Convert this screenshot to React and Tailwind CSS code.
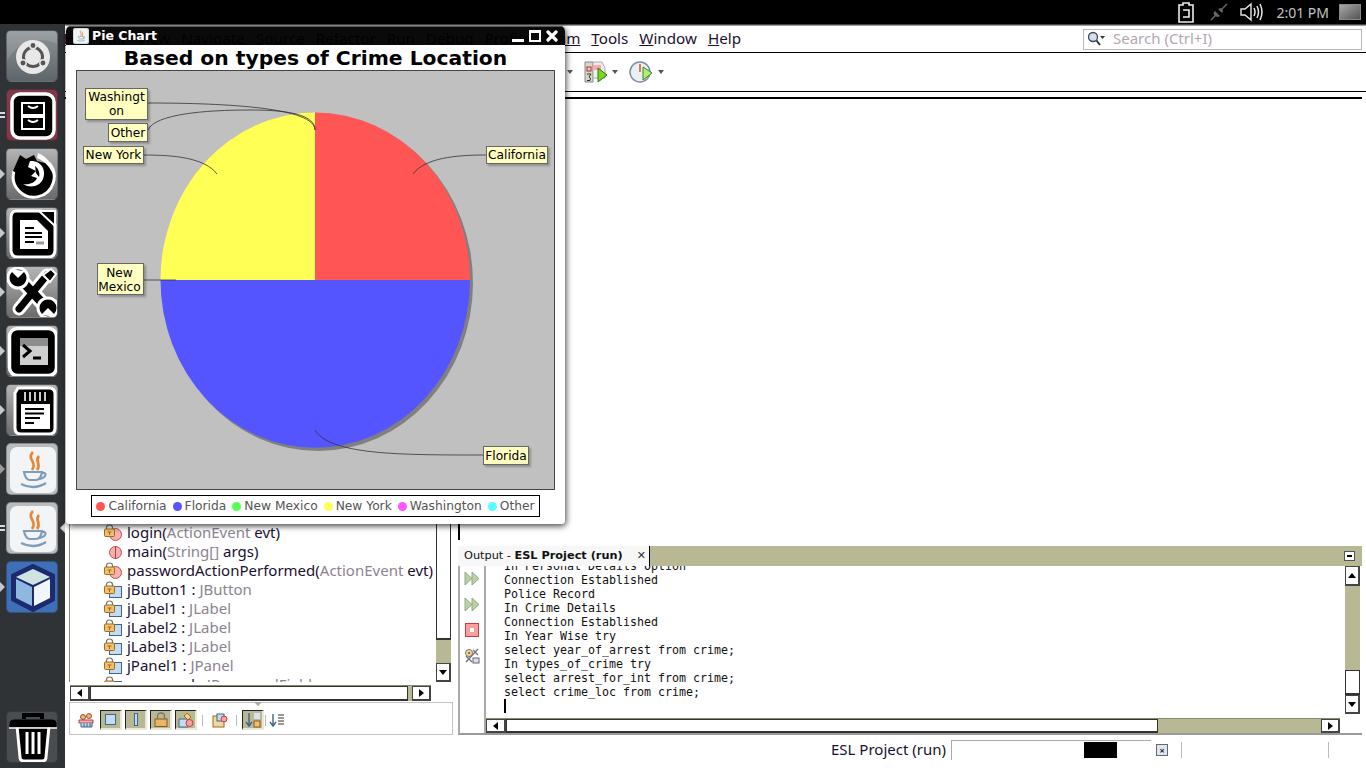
import React from "react";

const UI = "font-['Noto_Sans',sans-serif]";
const DV = "font-['DejaVu_Sans',sans-serif]";

function Tile({ bg, children, indicator, right }) {
  return (
    <div className="relative w-[52px] h-[52px] ml-[6px] shrink-0">
      <div className={`w-full h-full rounded-[5px] border border-[#00000040] overflow-hidden ${bg}`}>{children}</div>
      {indicator === "arrow" && <span className="absolute -left-[6px] top-[21px] w-0 h-0 border-y-[5px] border-y-transparent border-l-[5px] border-l-[#c8c8c8]" />}
      {indicator === "hollow" && <span className="absolute -left-[6px] top-[21px] w-0 h-0 border-y-[5px] border-y-transparent border-l-[5px] border-l-[#9a9a9a]" />}
      {indicator === "double" && (
        <span className="absolute -left-[6px] top-[23px] w-[5px] flex flex-col gap-[2px]">
          <span className="h-[2px] bg-[#d8d8d8]" />
          <span className="h-[2px] bg-[#d8d8d8]" />
        </span>
      )}
      {right && <span className="absolute -right-[7px] top-[21px] w-0 h-0 border-y-[5px] border-y-transparent border-r-[5px] border-r-[#d0d0d0]" />}
    </div>
  );
}

const Svg = ({ children }) => <svg viewBox="0 0 52 52" width="52" height="52" className="block">{children}</svg>;

const UbuntuIcon = () => (
  <Svg>
    <path d="M0 30 C12 8 34 4 52 14 V0 H0Z" fill="#ffffff" opacity=".12" />
    <circle cx="26" cy="26" r="17" fill="#e8e8e8" />
    <circle cx="26" cy="26" r="9.5" fill="none" stroke="#555" strokeWidth="3" />
    <circle cx="26" cy="14.5" r="3.2" fill="#555" stroke="#e8e8e8" strokeWidth="1.5" />
    <circle cx="16" cy="32" r="3.2" fill="#555" stroke="#e8e8e8" strokeWidth="1.5" />
    <circle cx="36" cy="32" r="3.2" fill="#555" stroke="#e8e8e8" strokeWidth="1.5" />
  </Svg>
);
const FilesIcon = () => (
  <Svg>
    <rect x="5" y="4" width="42" height="44" rx="8" fill="#000" stroke="#fff" strokeWidth="3.5" />
    <rect x="15" y="13" width="22" height="12" fill="none" stroke="#fff" strokeWidth="2" />
    <rect x="15" y="27" width="22" height="12" fill="none" stroke="#fff" strokeWidth="2" />
    <path d="M21 16 q5 4 10 0 M21 30 q5 4 10 0" fill="none" stroke="#fff" strokeWidth="2" />
  </Svg>
);
const FoxIcon = () => (
  <Svg>
    <path d="M7 22 A20.5 20.5 0 1 0 42 14" fill="#000" stroke="#fff" strokeWidth="3" />
    <path d="M6 22 L13 6 L19 10 L27 6 L30 12 L42 15 L40 30 L20 30Z" fill="#000" />
    <path d="M31 4 C41 8 48 18 47 28 C44 19 38 12 30 9Z" fill="#fff" />
    <path d="M23 12 C33 11 40 20 36 30 C33 37 24 40 16 35 C22 36 28 34 30 29 L24 27 L29 22 L21 18Z" fill="#fff" />
    <path d="M28 17 C32 20 33 25 32 28 L29 24Z" fill="#000" />
  </Svg>
);
const WriterIcon = () => (
  <Svg>
    <path d="M9 3 H34 L48 17 V42 Q48 49 41 49 H11 Q4 49 4 42 V10 Q4 3 9 3Z" fill="#000" stroke="#fff" strokeWidth="3" />
    <path d="M13 12 H30 L41 23 V41 H13Z" fill="#fff" />
    <path d="M32 3 L48 3 L48 18Z" fill="#000" stroke="#fff" strokeWidth="2" />
    <path d="M18 20 H27 M18 25 H35 M18 29 H35 M18 34 H27" stroke="#000" strokeWidth="2.2" />
    <path d="M29 35 H37" stroke="#999" strokeWidth="3" />
  </Svg>
);
const ToolsIcon = () => (
  <Svg>
    <g fill="none" strokeLinecap="round">
      <path d="M13 12 L40 41" stroke="#fff" strokeWidth="15" />
      <path d="M40 8 L12 42" stroke="#fff" strokeWidth="13" />
      <path d="M13 12 L40 41" stroke="#000" strokeWidth="9" />
      <path d="M40 8 L12 42" stroke="#000" strokeWidth="7" />
    </g>
    <circle cx="11" cy="11" r="10" fill="#000" stroke="#fff" strokeWidth="3" />
    <path d="M2 2 L11 11 L18 4Z" fill="#fff" />
    <circle cx="41" cy="41" r="10" fill="#000" stroke="#fff" strokeWidth="3" />
    <path d="M50 50 L41 41 L34 48Z" fill="#fff" />
    <path d="M36 8 L44 2 L49 7 L43 15Z" fill="#000" stroke="#fff" strokeWidth="2" />
  </Svg>
);
const TerminalIcon = () => (
  <Svg>
    <rect x="2.5" y="2.5" width="47" height="47" rx="8" fill="#000" stroke="#fff" strokeWidth="3.5" />
    <rect x="13" y="12" width="28" height="27" fill="#cfcfcf" />
    <rect x="13" y="12" width="28" height="8" fill="#8d8d8d" />
    <path d="M16 19 L23 25 L16 31" fill="none" stroke="#000" strokeWidth="3" />
    <path d="M26 32 H34" stroke="#000" strokeWidth="3" />
  </Svg>
);
const NotesIcon = () => (
  <Svg>
    <path d="M11 3 H42 Q48 3 48 9 V43 Q48 49 42 49 H14 Q8 49 8 43 V8Z" fill="#000" stroke="#fff" strokeWidth="3" />
    <path d="M18 7 V16 M23 7 V16 M28 7 V16 M33 7 V16 M38 7 V16" stroke="#ccc" strokeWidth="2" />
    <rect x="14" y="19" width="29" height="25" fill="#fff" />
    <path d="M18 24 H37 M18 28.5 H37 M18 33 H33 M18 38 H27" stroke="#000" strokeWidth="2.2" />
  </Svg>
);
const JavaGlyph = ({ s = 52 }) => (
  <svg viewBox="0 0 52 52" width={s} height={s} className="block">
    <rect x="3" y="3" width="46" height="46" rx="7" fill="#f2f4f6" />
    <path d="M26 8 C19 15 31 18 25 26 M32 12 C27 17 35 20 30 26" fill="none" stroke="#e8873a" strokeWidth="2.8" />
    <path d="M17 28 H35 C34 34 32 36 29 36 H23 C20 36 18 33 17 28Z M35 29 C40 28 40 33 33 35" fill="none" stroke="#7f9db8" strokeWidth="2.2" />
    <path d="M14 40 C22 44 31 44 39 39" fill="none" stroke="#7f9db8" strokeWidth="2.4" />
  </svg>
);
const CubeIcon = () => (
  <Svg>
    <path d="M26 3 L47 13 V38 L26 49 L5 38 V13Z" fill="#1c2a6e" stroke="#1c2a6e" strokeWidth="2" strokeLinejoin="round" />
    <path d="M26 7 L43 15 L26 23 L9 15Z" fill="#cfe4e2" />
    <path d="M9 17 L25 25 V44 L9 36Z" fill="#8fb8e0" />
    <path d="M27 25 L43 17 V36 L27 44Z" fill="#f0f6fb" />
  </Svg>
);
const TrashIcon = () => (
  <Svg>
    <path d="M10 14 H42 L39 45 Q39 49 35 49 H17 Q13 49 13 45Z" fill="#000" stroke="#fff" strokeWidth="3" />
    <path d="M3 15 V11 Q3 8 7 8 H45 Q49 8 49 11 V15Z" fill="#000" stroke="#000" />
    <path d="M17 7 V3 H35 V7" fill="none" stroke="#000" strokeWidth="4" />
    <path d="M20 20 V42 M26 20 V42 M32 20 V42" stroke="#fff" strokeWidth="3" />
    <path d="M2 16 H50" stroke="#fff" strokeWidth="1.5" />
  </Svg>
);

function Launcher() {
  const gray = "bg-linear-to-b from-[#b4b4b4] to-[#6b6b6b]";
  return (
    <div className="w-[65px] shrink-0 flex flex-col pt-[6px] pb-[5px] gap-[7px] bg-[#2f3336]">
      <Tile bg="bg-linear-to-b from-[#8d9498] to-[#5f666a]"><UbuntuIcon /></Tile>
      <Tile bg="bg-[#7d3a4a]" indicator="double"><FilesIcon /></Tile>
      <Tile bg={gray} indicator="arrow"><FoxIcon /></Tile>
      <Tile bg={gray} indicator="arrow"><WriterIcon /></Tile>
      <Tile bg={gray} indicator="arrow"><ToolsIcon /></Tile>
      <Tile bg={gray} indicator="arrow"><TerminalIcon /></Tile>
      <Tile bg={gray} indicator="arrow"><NotesIcon /></Tile>
      <Tile bg="bg-[#b9bcbe]" indicator="hollow"><JavaGlyph /></Tile>
      <Tile bg="bg-[#b9bcbe]" indicator="double" right><JavaGlyph /></Tile>
      <Tile bg="bg-[#3f6fb5]" indicator="arrow"><CubeIcon /></Tile>
      <div className="mt-auto"><Tile bg="bg-[#4a4d50]"><TrashIcon /></Tile></div>
    </div>
  );
}

function TopBar() {
  return (
    <div className="h-[24px] shrink-0 bg-black flex items-center justify-end text-[#c8c8c8]">
      <svg width="18" height="22" viewBox="1 0 18 22" className="mr-[14px]">
        <path d="M3 4 H7 V2 H13 V4 H17 V21 H3Z M7 9 H13 V16 H7" fill="none" stroke="#eee" strokeWidth="1.6" />
      </svg>
      <svg width="20" height="20" viewBox="0 0 20 20" className="mr-[10px]">
        <path d="M2 18 L7 13 M13 7 L18 2" stroke="#666" strokeWidth="1.5" />
        <path d="M6 9 L11 14 L9 15 Q7 15 5 13 Q4 11 5 10Z M9 7 L13 11 L14 9 Q14 7 12 6Z" fill="#666" />
      </svg>
      <svg width="24" height="20" viewBox="0 0 24 20" className="mr-[13px]">
        <path d="M2 7 H6 L12 2 V18 L6 13 H2Z" fill="none" stroke="#e8e8e8" strokeWidth="1.4" />
        <path d="M15 6 Q17 10 15 14 M18 4 Q21 10 18 16 M21 2 Q25 10 21 18" fill="none" stroke="#e8e8e8" strokeWidth="1.5" />
      </svg>
      <span className={`${UI} text-[14px] mr-[10px] text-[#c4c4c4]`}>2:01 PM</span>
      <div className="w-[22px] h-[16px] mr-[5px] bg-linear-to-br from-[#a8a8a8] to-[#555] border border-[#888]" />
    </div>
  );
}

const MenuItem = ({ pre = "", u, post = "" }) => (
  <span>{pre}<u>{u}</u>{post}</span>
);

function MenuBar() {
  return (
    <div className="h-[29px] shrink-0 flex items-center border-b border-black bg-linear-to-b from-[#222] from-0% via-white via-[9%] to-white">
      <div className={`w-[676px] flex justify-end gap-[11px] ${UI} text-[15.2px] text-[#1c1030]`}>
        <MenuItem u="F" post="ile" />
        <MenuItem u="E" post="dit" />
        <MenuItem u="V" post="iew" />
        <MenuItem u="N" post="avigate" />
        <MenuItem u="S" post="ource" />
        <MenuItem pre="Ref" u="a" post="ctor" />
        <MenuItem u="R" post="un" />
        <MenuItem u="D" post="ebug" />
        <MenuItem u="P" post="rofile" />
        <MenuItem pre="Te" u="am" />
        <MenuItem u="T" post="ools" />
        <MenuItem u="W" post="indow" />
        <MenuItem u="H" post="elp" />
      </div>
      <div className="ml-auto mr-[4px] mt-[2px] w-[279px] h-[21px] border border-[#b8b8b8] flex items-center pl-[3px]">
        <svg width="18" height="16" viewBox="0 0 18 16">
          <circle cx="6" cy="6" r="4.5" fill="#cfe0f2" stroke="#445" strokeWidth="1.3" />
          <path d="M9.5 9.5 L13 14" stroke="#333" strokeWidth="2" />
          <path d="M13 5 H18 L15.5 8Z" fill="#333" />
        </svg>
        <span className={`${UI} text-[15px] leading-[17px] pb-[2px] text-[#b3a8b3] ml-[8px]`}>Search (Ctrl+I)</span>
      </div>
    </div>
  );
}

const Caret = () => <span className="w-0 h-0 border-x-[3.5px] border-x-transparent border-t-[4px] border-t-[#555]" />;

function ToolBar() {
  return (
    <div className="h-[39px] shrink-0 flex items-center border-b border-black pl-[502px]">
      <Caret />
      <svg width="24" height="24" viewBox="0 0 24 24" className="ml-[11px]">
        <path d="M1 2 H9 V22 H1Z" fill="#d8d6c4" stroke="#888" />
        <path d="M9 2 H18 L21 8 V18 H9Z" fill="#eee" stroke="#aaa" />
        <path d="M9 5 H17 V10 H9Z" fill="#f9a8a8" />
        <rect x="3" y="7" width="4" height="4" fill="none" stroke="#b03030" />
        <path d="M3 14 H7 L5 17 Q7.5 18 6 20.5 H3" fill="none" stroke="#333" />
        <path d="M14 8 L23 15 L14 22Z" fill="#7ed321" stroke="#2a7a10" />
      </svg>
      <span className="ml-[4px] flex"><Caret /></span>
      <svg width="24" height="24" viewBox="0 0 24 24" className="ml-[11px]">
        <circle cx="11" cy="12" r="10" fill="#e8eff6" stroke="#7d8ea0" strokeWidth="1.5" />
        <path d="M11 4 V12" stroke="#d06020" strokeWidth="1.6" />
        <path d="M14 7 L23 13 L14 20Z" fill="#b4ec78" stroke="#3a8a20" />
      </svg>
      <span className="ml-[5px] flex"><Caret /></span>
    </div>
  );
}

const Lock = () => (
  <svg width="11" height="13" viewBox="0 0 11 13" className="block">
    <path d="M2.5 5 V3.5 Q2.5 1 5.5 1 Q8.5 1 8.5 3.5 V5" fill="none" stroke="#776" strokeWidth="1.2" />
    <rect x="0.5" y="5" width="10" height="7.5" rx="1" fill="#f0c070" stroke="#a06a20" />
    <path d="M3.5 8 H7.5 M5.5 8 V11" stroke="#a06a20" />
  </svg>
);
const PrivMethod = () => (
  <span className="relative block w-[20px] h-[17px]">
    <span className="absolute left-[5px] top-[4px] w-[13px] h-[13px] rounded-full bg-[#f8b0b0] border border-[#c05050]" />
    <span className="absolute left-0 top-0"><Lock /></span>
  </span>
);
const PrivField = () => (
  <span className="relative block w-[20px] h-[17px]">
    <span className="absolute left-[5px] top-[5px] w-[13px] h-[12px] bg-[#c4dcf2] border border-[#40648c]" />
    <span className="absolute left-0 top-0"><Lock /></span>
  </span>
);
const StaticMethod = () => (
  <span className="relative block w-[20px] h-[17px]">
    <span className="absolute left-[5px] top-[3px] w-[13px] h-[13px] rounded-full bg-[#f4b0b0] border border-[#c05050]" />
    <span className="absolute left-[11px] top-[3px] w-[1px] h-[13px] bg-[#b04040]" />
  </span>
);

function Row({ icon, name, type, tail, sep }) {
  return (
    <div className="h-[19px] shrink-0 flex items-center pl-[33px] whitespace-pre">
      <span className="w-[23px] shrink-0">{icon}</span>
      <span className="text-[#1a1030]">{name}</span>
      {sep && <span className="text-[#1a1030]"> : </span>}
      <span className="text-[#8c8490]">{type}</span>
      {tail && <span className="text-[#1a1030]">{tail}</span>}
    </div>
  );
}

const Arrow = ({ dir }) => {
  const cls = {
    up: "border-x-[4px] border-x-transparent border-b-[5px] border-b-black",
    down: "border-x-[4px] border-x-transparent border-t-[5px] border-t-black",
    left: "border-y-[4px] border-y-transparent border-r-[5px] border-r-black",
    right: "border-y-[4px] border-y-transparent border-l-[5px] border-l-black",
  }[dir];
  return <span className={`w-0 h-0 ${cls}`} />;
};
const SBtn = ({ dir, className = "" }) => (
  <div className={`shrink-0 flex items-center justify-center bg-white border border-[#444] border-b-2 border-r-2 ${className}`}>
    <Arrow dir={dir} />
  </div>
);
const Toggle = ({ children }) => (
  <span className="w-[22px] h-[20px] flex items-center justify-center bg-[#b8b894] border-t border-l border-[#222] border-r-2 border-b-2 border-r-[#e8e8d8] border-b-[#e8e8d8]">{children}</span>
);

function Navigator() {
  return (
    <div className="w-[390px] shrink-0 pl-[4px] flex flex-col">
      <div className="flex flex-1 min-h-0 pl-[1px] border-l border-[#8a8a70]">
        <div className={`flex-1 min-w-0 overflow-hidden flex flex-col justify-end ${UI} text-[15px]`}>
          <div className="flex flex-col -mb-[12px]">
            <Row icon={<PrivMethod />} name="login(" type="ActionEvent" tail=" evt)" />
            <Row icon={<StaticMethod />} name="main(" type="String[]" tail=" args)" />
            <Row icon={<PrivMethod />} name="passwordActionPerformed(" type="ActionEvent" tail=" evt)" />
            <Row icon={<PrivField />} name="jButton1" sep type="JButton" />
            <Row icon={<PrivField />} name="jLabel1" sep type="JLabel" />
            <Row icon={<PrivField />} name="jLabel2" sep type="JLabel" />
            <Row icon={<PrivField />} name="jLabel3" sep type="JLabel" />
            <Row icon={<PrivField />} name="jPanel1" sep type="JPanel" />
            <Row icon={<PrivField />} name="password" sep type="JPasswordField" />
          </div>
        </div>
        <div className="w-[15px] shrink-0 mr-[4px] flex flex-col">
          <div className="flex-1 bg-white border border-[#333] border-b-2" />
          <div className="h-[23px] bg-[#b8b894]" />
          <SBtn dir="down" className="h-[19px]" />
        </div>
      </div>
      <div className="h-[16px] mt-[3px] mr-[24px] ml-[1px] flex border-t border-[#8a8a70]">
        <SBtn dir="left" className="w-[20px]" />
        <div className="flex-1 bg-white border border-[#333] border-b-2" />
        <div className="w-[4px] bg-[#b8b894]" />
        <SBtn dir="right" className="w-[19px]" />
      </div>
      <div className="relative h-[33px] mt-[1px] mb-[2px] mr-[2px] border border-[#c4c4c4] flex items-center pl-[8px] pt-[3px]">
        <span className="absolute right-[190px] -top-px w-0 h-0 border-x-[4px] border-x-transparent border-t-[4px] border-t-[#aaa]" />
        <svg width="17" height="17" viewBox="0 0 17 17" className="mr-[5px]">
          <circle cx="5" cy="5" r="2.5" fill="#f0b080" stroke="#a05a30" />
          <circle cx="11" cy="4" r="2.5" fill="#f0b080" stroke="#a05a30" />
          <path d="M1 8 H15 V11 H1Z" fill="#f8b0b0" stroke="#b04040" />
          <path d="M3 11 V15 H14 V11 M6 11 V15 M9 11 V15 M12 11 V15" fill="#bcd8f0" stroke="#40648c" />
        </svg>
        <div className="flex gap-[3px]">
          <Toggle><span className="block w-[11px] h-[11px] bg-[#c4dcf2] border border-[#40648c]" /></Toggle>
          <Toggle><span className="block w-[4px] h-[13px] bg-[#c4dcf2] border border-[#40648c]" /></Toggle>
          <Toggle>
            <svg width="14" height="15" viewBox="0 0 14 15"><path d="M3.5 7 V4 Q3.5 1 7 1 Q10.5 1 10.5 4 V7" fill="none" stroke="#776" strokeWidth="1.3" /><rect x="1" y="7" width="12" height="7.5" fill="#e8b468" stroke="#8a5a20" /></svg>
          </Toggle>
          <Toggle>
            <svg width="16" height="16" viewBox="0 0 16 16"><path d="M1 7 H10 V15 H1Z" fill="#c4dcf2" stroke="#40648c" /><path d="M6 4 L9 1 L13 5 L10 8Z" fill="#f0d080" stroke="#a07020" /><circle cx="11.5" cy="11" r="3.5" fill="#f8a0a0" stroke="#c04040" /></svg>
          </Toggle>
        </div>
        <span className="w-px h-[11px] bg-[#bbb] ml-[5px]" />
        <svg width="16" height="16" viewBox="0 0 16 16" className="ml-[9px]">
          <rect x="1" y="4" width="11" height="11" fill="#f0d8a0" stroke="#9a6a20" />
          <rect x="5" y="2" width="7" height="7" fill="#c4dcf2" stroke="#40648c" />
          <circle cx="12" cy="7" r="3" fill="#f8a0a0" stroke="#c04040" />
        </svg>
        <span className="w-px h-[11px] bg-[#bbb] ml-[8px]" />
        <span className="ml-[5px]">
          <Toggle>
            <svg width="16" height="16" viewBox="0 0 16 16"><path d="M4 1 V13 M1 10 L4 14 L7 10" fill="none" stroke="#40648c" strokeWidth="1.4" /><rect x="9" y="1" width="6" height="6" fill="#dde" /><rect x="9" y="9" width="6" height="6" fill="#f0c070" stroke="#8a5a20" /></svg>
          </Toggle>
        </span>
        <span className="w-px h-[11px] bg-[#bbb] ml-[1px]" />
        <svg width="16" height="15" viewBox="0 0 16 15" className="ml-[3px]">
          <path d="M4 1 V12 M1 9 L4 13 L7 9" fill="none" stroke="#40648c" strokeWidth="1.4" />
          <path d="M9 2 H15 M9 5 H15 M9 8 H15 M9 11 H15" stroke="#777" strokeWidth="1.3" />
        </svg>
      </div>
    </div>
  );
}

const OUTPUT = [
  "In Personal Details Option",
  "Connection Established",
  "Police Record",
  "In Crime Details",
  "Connection Established",
  "In Year Wise try",
  "select year_of_arrest from crime;",
  "In types_of_crime try",
  "select arrest_for_int from crime;",
  "select crime_loc from crime;",
];

const RunArrows = () => (
  <svg width="16" height="15" viewBox="0 0 16 15" className="block">
    <path d="M1 1 L8 7.5 L1 14Z M8 1 L15 7.5 L8 14Z" fill="#bcd0a8" stroke="#93a888" />
  </svg>
);

function OutputPane() {
  return (
    <div className="flex-1 min-w-0 flex flex-col">
      <div className="flex-1 min-h-0 border-l-2 border-black mb-[6px]" />
      <div className="h-[20px] shrink-0 flex bg-[#b8b894]">
        <div className={`w-[192px] flex items-center bg-[#f7f7f7] border-r border-black pl-[6px] whitespace-nowrap ${DV} text-[11.3px] text-[#111]`}>
          <span>Output - <b>ESL Project (run)</b></span>
          <span className="ml-[14px] text-[11px] text-[#333]">✕</span>
        </div>
        <div className="ml-auto mr-[7px] mt-[5px] w-[11px] h-[10px] bg-white border border-[#555] flex items-center justify-center">
          <span className="w-[5px] h-[2px] bg-black" />
        </div>
      </div>
      <div className="h-[169px] shrink-0 flex border-b-2 border-[#999] border-l-2 border-l-[#aaa] mb-[2px]">
        <div className="w-[26px] shrink-0 flex flex-col items-center gap-[11px] pt-[5px] border-r-2 border-[#aaa] bg-white">
          <RunArrows />
          <RunArrows />
          <span className="w-[14px] h-[14px] bg-[#f8a0a0] border border-[#c04040] flex items-center justify-center"><span className="w-[4px] h-[4px] bg-white" /></span>
          <svg width="16" height="16" viewBox="0 0 16 16">
            <circle cx="5" cy="5" r="3.5" fill="#f0e0a0" stroke="#777" />
            <circle cx="5" cy="5" r="1.2" fill="#a07020" />
            <path d="M14 1 L2 14 M2 8 L8 14 M9 2 L14 7" stroke="#777" strokeWidth="1.4" fill="none" />
            <rect x="9" y="10" width="6" height="5" fill="#dde" stroke="#667" />
          </svg>
        </div>
        <div className="flex-1 min-w-0 flex flex-col">
          <div className="flex-1 min-h-0 flex">
            <div className="flex-1 min-w-0 overflow-hidden pl-[18px] font-['DejaVu_Sans_Mono',monospace] text-[11.63px] leading-[14px] text-[#111] whitespace-pre">
              <div className="-mt-[7px]">
                {OUTPUT.map((l, i) => <div key={i} className="h-[14px]">{l}</div>)}
                <div className="h-[14px] flex items-center"><span className="w-[2px] h-[14px] bg-black" /></div>
              </div>
            </div>
            <div className="w-[15px] shrink-0 mr-[2px] mb-[4px] flex flex-col">
              <SBtn dir="up" className="h-[20px]" />
              <div className="h-[84px] bg-[#b8b894]" />
              <div className="flex-1 bg-white border border-[#333] border-b-2" />
              <SBtn dir="down" className="h-[19px]" />
            </div>
          </div>
          <div className="h-[15px] shrink-0 mr-[22px] flex border-t border-[#8a8a70]">
            <SBtn dir="left" className="w-[20px]" />
            <div className="w-[652px] bg-white border border-[#333] border-b-2" />
            <div className="flex-1 bg-[#b8b894]" />
            <SBtn dir="right" className="w-[19px]" />
          </div>
        </div>
      </div>
    </div>
  );
}

function Status() {
  return (
    <div className="h-[31px] shrink-0 flex items-start pt-[3px] pl-[766px] bg-white">
      <span className={`${UI} text-[15px] text-[#1a1030] w-[120px] -mt-[2px]`}>ESL Project (run)</span>
      <div className="w-[200px] h-[20px] border-t border-l border-[#aaa] pl-[132px] pt-[1px]">
        <div className="w-[33px] h-[16px] bg-black" />
      </div>
      <span className="mt-[4px] ml-[5px] w-[12px] h-[12px] bg-[#dfe6ee] border border-[#667] flex items-center justify-center text-[9px] leading-none font-bold text-[#222]">×</span>
      <span className="w-px h-[16px] bg-[#bbb] ml-[13px] mt-[2px]" />
      <span className="w-px h-[16px] bg-[#bbb] ml-[146px] mt-[2px]" />
    </div>
  );
}

const LABELS = [
  { t: "Washingt", t2: "on", x: 85, y: 88, w: 63, h: 32, c: "" },
  { t: "Other", x: 108, y: 123, w: 40, h: 19, c: "" },
  { t: "New York", x: 83, y: 146, w: 61, h: 18, c: "pb-[1px]" },
  { t: "New", t2: "Mexico", x: 97, y: 263, w: 47, h: 32, c: "pt-[1px] pr-[2px]" },
  { t: "California", x: 486, y: 146, w: 62, h: 18, c: "pb-[1px]" },
  { t: "Florida", x: 483, y: 446, w: 46, h: 19, c: "" },
];

const LEGEND = [
  ["California", "bg-[#ff5555]"],
  ["Florida", "bg-[#5555ff]"],
  ["New Mexico", "bg-[#55ff55]"],
  ["New York", "bg-[#ffff55]"],
  ["Washington", "bg-[#ff55ff]"],
  ["Other", "bg-[#55ffff]"],
];

function ChartWindow() {
  return (
    <div className="absolute left-[66px] top-[26px] w-[499px] h-[498px] flex flex-col rounded-t-[5px] rounded-b-[4px] overflow-hidden shadow-[1px_2px_6px_rgba(0,0,0,.75)]">
      <div className="h-[19px] shrink-0 flex items-center bg-black/[0.96] border-t border-[#555] pl-[7px]">
        <span className="w-[16px] h-[16px] rounded-[2px] bg-[#cfd6dd] overflow-hidden"><JavaGlyph s={16} /></span>
        <span className={`${DV} font-bold text-[12.5px] text-white ml-[3px]`}>Pie Chart</span>
        <div className="ml-auto flex items-center gap-[5px] pr-[7px]">
          <span className="w-[12px] h-[12px] flex items-end"><span className="w-full h-[3px] bg-white" /></span>
          <span className="w-[12px] h-[12px] border-2 border-t-[3px] border-white" />
          <svg width="12" height="12" viewBox="0 0 12 12"><path d="M2 2 L10 10 M10 2 L2 10" stroke="#fff" strokeWidth="3.2" strokeLinecap="round" /></svg>
        </div>
      </div>
      <div className="flex-1 min-h-0 bg-white flex flex-col items-center">
        <div className={`h-[25px] shrink-0 pt-[1px] ${DV} font-bold text-[20.3px] leading-[25px] text-black whitespace-nowrap`}>Based on types of Crime Location</div>
        <div className="relative w-[479px] h-[420px] shrink-0 bg-[#c0c0c0] border border-[#444]">
          <svg width="479" height="420" viewBox="76 70 479 420" className="absolute -left-px -top-px">
            <ellipse cx="318" cy="283" rx="155" ry="168" fill="#808080" />
            <path d="M160.5 280 A154.5 167.5 0 0 0 470 280Z" fill="#5555ff" />
            <path d="M315 280 L315 112.5 A155 167.5 0 0 1 470 280Z" fill="#ff5555" />
            <path d="M315 280 L160.5 280 A154.5 167.5 0 0 1 315 112.5Z" fill="#ffff55" />
            <g fill="none" stroke="#333" strokeWidth="0.8">
              <path d="M147 103 C230 103 315 108 315 130" />
              <path d="M148 130 C155 114 205 110 250 110 C290 110 315 115 315 130" />
              <path d="M144 155 C175 155 205 158 217 174" />
              <path d="M143 280 H176" />
              <path d="M486 155 C455 155 425 158 413 174" />
              <path d="M483 455 C400 455 330 455 315 430" />
            </g>
          </svg>
          {LABELS.map((l) => (
            <div
              key={l.t}
              className={`absolute flex flex-col items-center justify-center bg-[#ffffc0] border border-[#666] shadow-[2px_2px_2px_rgba(0,0,0,.25)] ${DV} text-[12.2px] leading-[14px] text-black ${l.c}`}
              style={{ left: l.x - 77, top: l.y - 71, width: l.w, height: l.h }}
            >
              <span>{l.t}</span>
              {l.t2 && <span>{l.t2}</span>}
            </div>
          ))}
        </div>
        <div className={`mt-[5px] w-[449px] h-[22px] shrink-0 border border-black flex items-center justify-center gap-[6px] ${DV} text-[12.25px] text-[#555]`}>
          {LEGEND.map(([t, c]) => (
            <span key={t} className="flex items-center gap-[3px]">
              <span className={`w-[9px] h-[9px] rounded-full ${c}`} />
              {t}
            </span>
          ))}
        </div>
      </div>
    </div>
  );
}

export default function App() {
  return (
    <div className="relative w-[1366px] h-[768px] overflow-hidden flex flex-col bg-white">
      <TopBar />
      <div className="flex-1 min-h-0 flex">
        <Launcher />
        <div className="flex-1 min-w-0 flex flex-col">
          <MenuBar />
          <ToolBar />
          <div className="h-[7px] shrink-0 mr-[4px] border-b-2 border-black" />
          <div className="flex-1 min-h-0 flex pr-[4px]">
            <Navigator />
            <div className="w-[3px] shrink-0" />
            <OutputPane />
          </div>
          <Status />
        </div>
      </div>
      <ChartWindow />
    </div>
  );
}
